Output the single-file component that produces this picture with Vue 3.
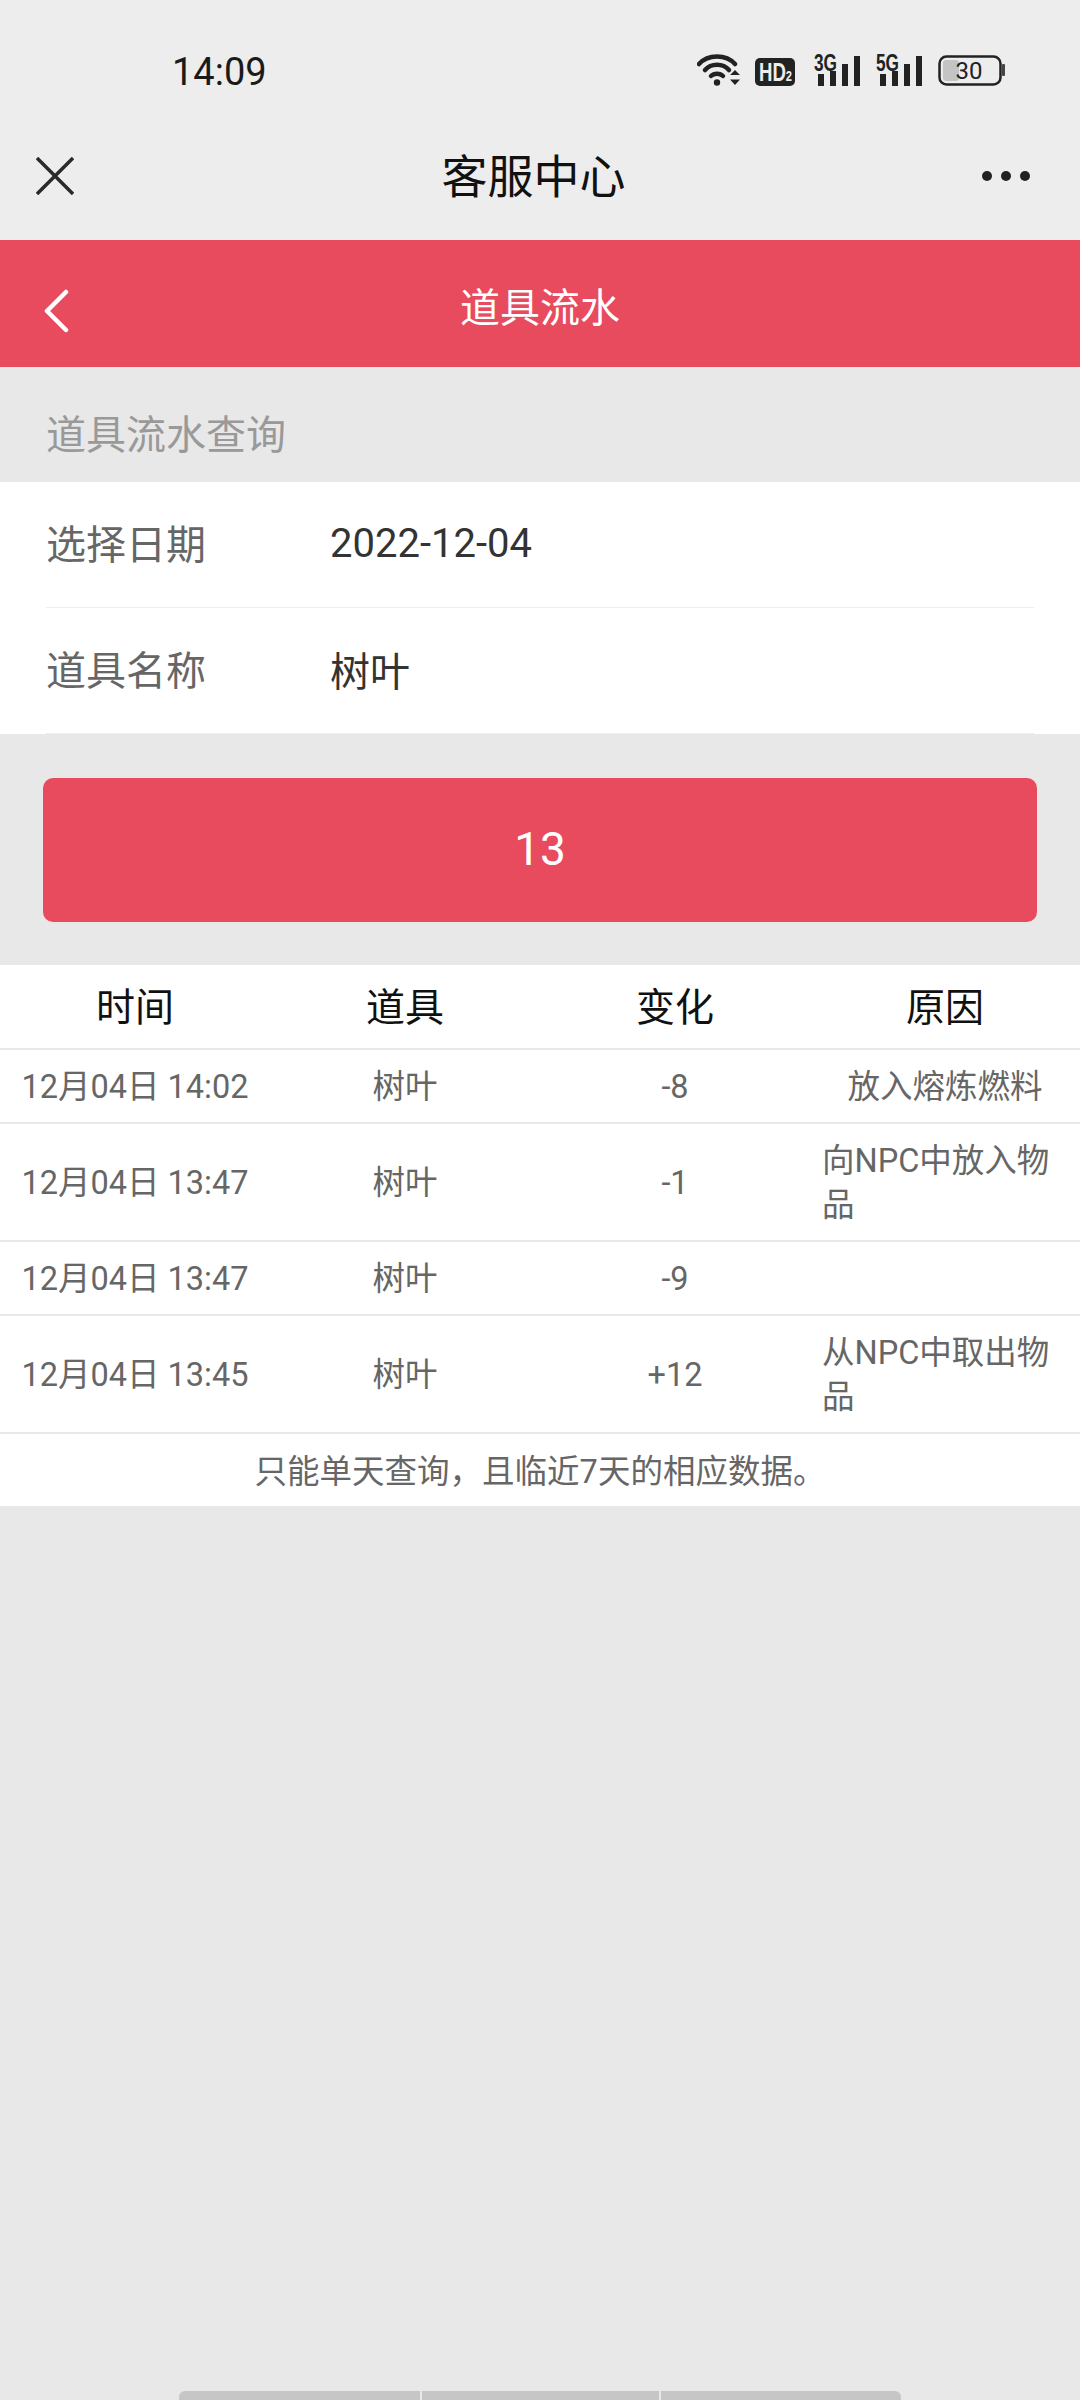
<template>
  <div class="page">
    <div class="topbar">
      <div class="status">
        <span class="clock">14:09</span>
        <div class="status-icons">
          <svg width="44" height="32" viewBox="0 0 44 32" class="ic-wifi">
            <path d="M2 10 C11 0 29 0 38 10" fill="none" stroke="#222" stroke-width="4.5" stroke-linecap="round"/>
            <path d="M8 16 C14 9 26 9 32 16" fill="none" stroke="#222" stroke-width="4.5" stroke-linecap="round"/>
            <path d="M14 22 C17 19 23 19 26 22" fill="none" stroke="#222" stroke-width="4.5" stroke-linecap="round"/>
            <circle cx="20" cy="28.5" r="3.2" fill="#222"/>
            <path d="M33 21 L38 16 L43 21 Z M33 25.5 L43 25.5 L38 31 Z" fill="#222"/>
          </svg>
          <svg width="40" height="28" viewBox="0 0 40 28" class="ic-hd">
            <rect width="40" height="28" rx="5" fill="#222"/>
            <text x="4" y="22.5" class="hd-text" textLength="33" lengthAdjust="spacingAndGlyphs">HD<tspan class="hd-sub">2</tspan></text>
          </svg>
          <svg v-for="net in networks" :key="net" width="46" height="38" viewBox="0 -6 46 38" class="ic-net">
            <text x="0" y="17" class="net-text" textLength="23" lengthAdjust="spacingAndGlyphs">{{ net }}</text>
            <rect x="4" y="20" width="6" height="12" fill="#222"/>
            <rect x="16" y="17" width="6" height="15" fill="#222"/>
            <rect x="28" y="10" width="6" height="22" fill="#222"/>
            <rect x="40" y="2" width="6" height="30" fill="#222"/>
          </svg>
          <svg width="68" height="31" viewBox="0 0 68 31" class="ic-battery">
            <rect x="1.5" y="1.5" width="61" height="28" rx="7" fill="none" stroke="#222" stroke-width="2.5"/>
            <rect x="5" y="5" width="16" height="21" rx="3" fill="#c4c4c4"/>
            <rect x="64" y="9" width="3" height="12" rx="1" fill="#444"/>
            <text x="31" y="24" text-anchor="middle" class="bat-text">30</text>
          </svg>
        </div>
      </div>
      <div class="nav">
        <svg width="38" height="38" viewBox="0 0 38 38" class="ic-close">
          <path d="M1 1 L37 37 M37 1 L1 37" stroke="#2a2a2a" stroke-width="3.5" fill="none"/>
        </svg>
        <span class="nav-title">客服中心</span>
        <div class="dots"><i></i><i></i><i></i></div>
      </div>
    </div>

    <div class="header">
      <svg width="26" height="44" viewBox="0 0 26 44" class="ic-back">
        <path d="M23 3 L4 22 L23 41" stroke="#fff" stroke-width="4.5" stroke-linecap="round" stroke-linejoin="round" fill="none"/>
      </svg>
      <span class="header-title">道具流水</span>
    </div>

    <div class="section-title">道具流水查询</div>

    <div class="form">
      <div class="form-row">
        <span class="form-label">选择日期</span>
        <span class="form-value date">2022-12-04</span>
      </div>
      <div class="form-row">
        <span class="form-label">道具名称</span>
        <span class="form-value">树叶</span>
      </div>
    </div>

    <div class="btn-wrap">
      <div class="btn">13</div>
    </div>

    <div class="table">
      <div class="row head">
        <div v-for="h in heads" :key="h" class="cell">{{ h }}</div>
      </div>
      <div v-for="(r, i) in rows" :key="i" class="row">
        <div class="cell">{{ r.time }}</div>
        <div class="cell">{{ r.item }}</div>
        <div class="cell">{{ r.change }}</div>
        <div class="cell reason">{{ r.reason }}</div>
      </div>
      <div class="note">只能单天查询，且临近7天的相应数据。</div>
    </div>

    <div class="home-bar">
      <div class="seg seg1"></div>
      <div class="seg seg2"></div>
      <div class="seg seg3"></div>
    </div>
  </div>
</template>

<script setup>
const networks = ['3G', '5G']
const heads = ['时间', '道具', '变化', '原因']
const rows = [
  { time: '12月04日 14:02', item: '树叶', change: '-8', reason: '放入熔炼燃料' },
  { time: '12月04日 13:47', item: '树叶', change: '-1', reason: '向NPC中放入物品' },
  { time: '12月04日 13:47', item: '树叶', change: '-9', reason: '' },
  { time: '12月04日 13:45', item: '树叶', change: '+12', reason: '从NPC中取出物品' }
]
</script>

<style>
html, body {
  margin: 0;
  background: #e8e8e8;
}
</style>

<style scoped>
.page {
  width: 1080px;
  height: 2400px;
  display: flex;
  flex-direction: column;
  background: #e8e8e8;
  font-family: Roboto, "Noto Sans CJK SC", sans-serif;
  overflow: hidden;
}
.topbar {
  background: #ededed;
  height: 240px;
}
.status {
  height: 112px;
  padding: 32px 74px 0 172px;
  box-sizing: border-box;
  display: flex;
  align-items: center;
  justify-content: space-between;
}
.clock {
  font-size: 38px;
  color: #1a1a1a;
}
.status-icons {
  display: flex;
  align-items: flex-end;
  gap: 16px;
  margin-bottom: 10px;
}
.status-icons svg {
  display: block;
}
.ic-wifi {
  margin-right: -2px;
}
.ic-hd {
  margin-right: 3px;
}
.hd-text {
  font: bold 25px "Liberation Sans", sans-serif;
  fill: #ededed;
}
.hd-sub {
  font-size: 15px;
}
.net-text {
  font: bold 23px "Liberation Sans", sans-serif;
  fill: #222;
}
.bat-text {
  font: 24px Roboto, sans-serif;
  fill: #222;
}
.nav {
  height: 128px;
  padding: 0 50px 0 36px;
  display: flex;
  align-items: center;
  justify-content: space-between;
}
.nav-title {
  font-size: 46px;
  color: #111;
  margin: -6px 0 0 11px;
}
.dots {
  display: flex;
  gap: 9px;
}
.dots i {
  width: 10px;
  height: 10px;
  border-radius: 50%;
  background: #222;
}
.header {
  position: relative;
  height: 127px;
  background: #e94b5e;
  display: flex;
  align-items: center;
  justify-content: center;
}
.ic-back {
  position: absolute;
  left: 43px;
  top: 49px;
}
.header-title {
  font-size: 40px;
  color: #fff;
  margin-top: 2px;
}
.section-title {
  height: 115px;
  padding: 45px 46px 0;
  box-sizing: border-box;
  font-size: 40px;
  line-height: 48px;
  color: #999;
}
.form {
  background: #fff;
  padding: 0 46px;
}
.form-row {
  height: 125px;
  display: flex;
  align-items: center;
  border-bottom: 1px solid #eee;
  font-size: 40px;
}
.form-label {
  width: 284px;
  color: #666;
  margin-bottom: 5px;
}
.form-value {
  color: #333;
  margin-bottom: 4px;
}
.form-value.date {
  margin-bottom: 2px;
}
.btn-wrap {
  padding: 44px 43px 43px;
}
.btn {
  height: 144px;
  border-radius: 10px;
  background: #e94b5e;
  color: #fff;
  font-size: 46px;
  padding-bottom: 3px;
  box-sizing: border-box;
  display: flex;
  align-items: center;
  justify-content: center;
}
.table {
  background: #fff;
  color: #666;
  font-size: 32.5px;
}
.row {
  display: grid;
  grid-template-columns: repeat(4, 270px);
  padding: 15px 0 13px;
  border-bottom: 2px solid #e8e8e8;
  line-height: 44px;
}
.row.head {
  padding: 21px 0 18px;
  font-size: 39px;
  color: #111;
}
.cell {
  display: flex;
  align-items: center;
  justify-content: center;
}
.cell.reason {
  padding: 0 12px;
}
.note {
  height: 72px;
  padding-bottom: 3px;
  box-sizing: border-box;
  display: flex;
  align-items: center;
  justify-content: center;
}
.home-bar {
  margin-top: auto;
  display: flex;
  gap: 2px;
  padding: 0 179px;
}
.seg {
  height: 9px;
  background: #c6c6c6;
}
.seg1 {
  width: 241px;
  border-top-left-radius: 6px;
}
.seg2 {
  width: 237px;
}
.seg3 {
  flex: 1;
  border-top-right-radius: 6px;
}
</style>
